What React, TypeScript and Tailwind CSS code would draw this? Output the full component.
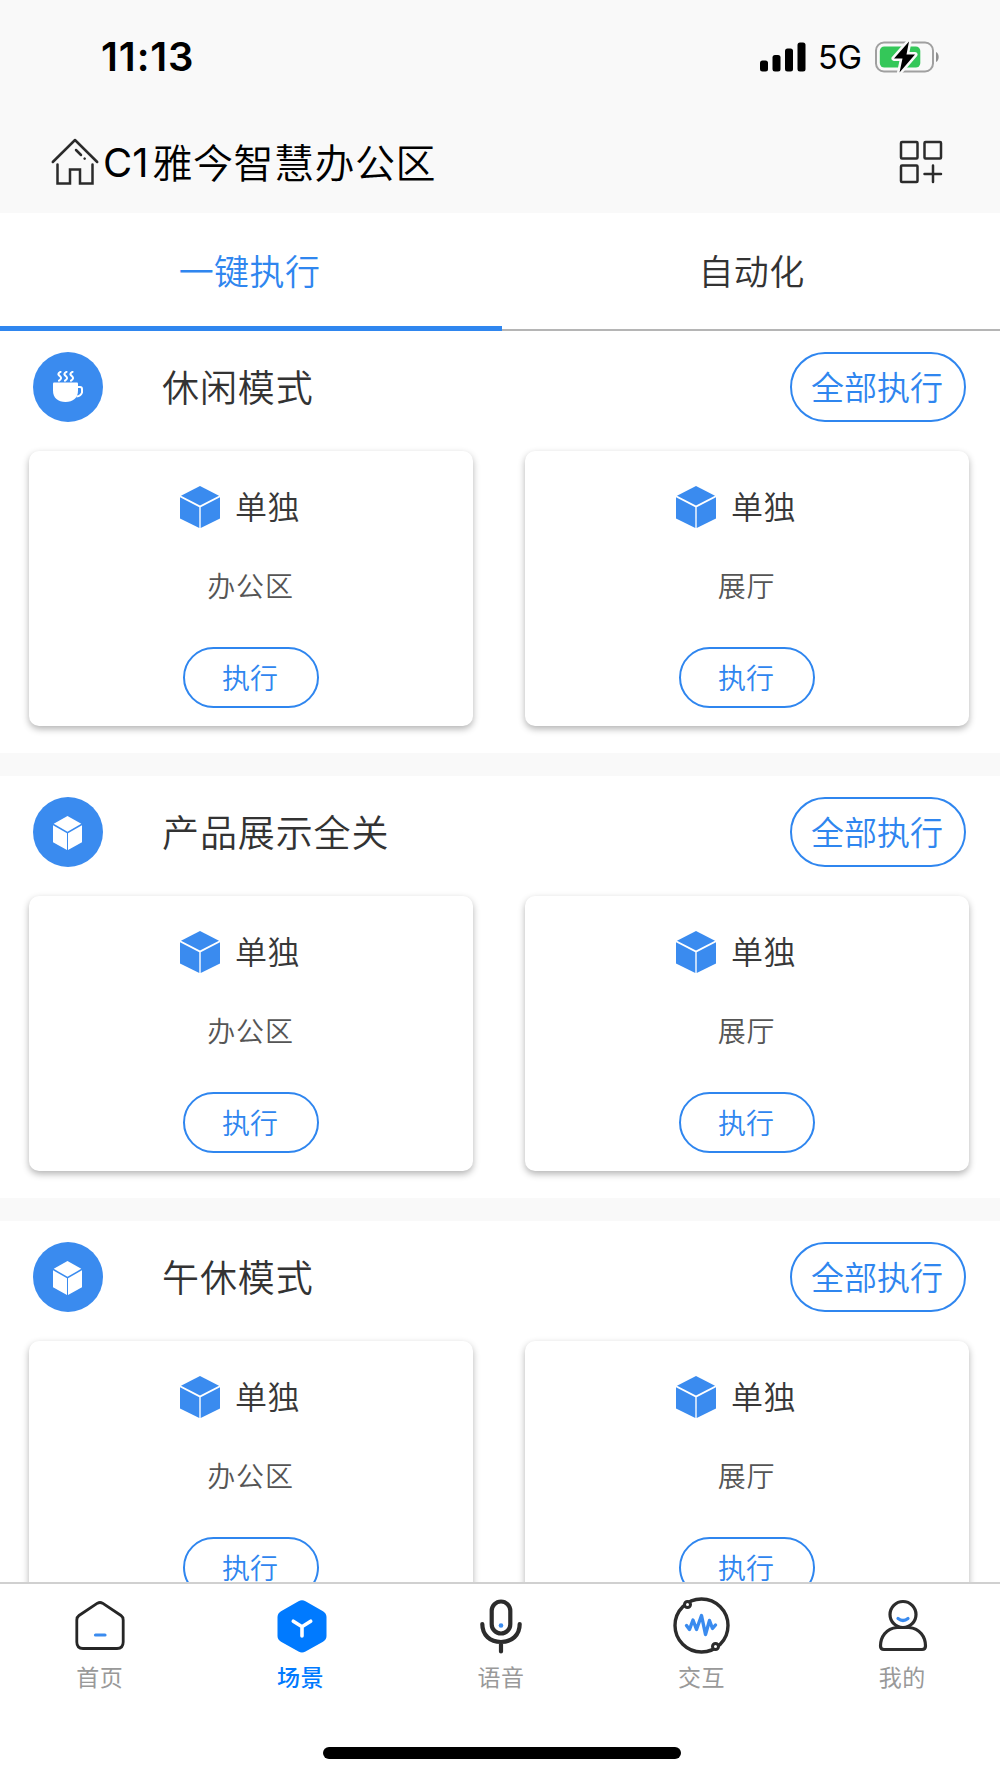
import type { ReactNode } from "react";

const HomeOutline = () => (
  <svg width="48" height="48" viewBox="0 0 48 48" fill="none" stroke="#2b2b2b" strokeWidth="2.500" strokeLinecap="round">
    <path d="M1.800 24 24 2l22.200 22" strokeLinejoin="round" />
    <path d="M6.500 26.500V45.500H19V31.500H29V45.500H41.500V26.500" />
    <path d="M25 12l5 5M33.600 20.600l.1.100" />
  </svg>
);

const GridAdd = () => (
  <svg width="44" height="44" viewBox="0 0 44 44" fill="none" stroke="#2b2b2b" strokeWidth="2.500" strokeLinecap="round">
    <rect x="2" y="2" width="16.500" height="16.500" rx="1" />
    <rect x="25.500" y="2" width="16.500" height="16.500" rx="1" />
    <rect x="2" y="25.500" width="16.500" height="16.500" rx="1" />
    <path d="M34 25.500V42M25.500 34H42" />
  </svg>
);

const Signal = () => (
  <svg width="46" height="30" viewBox="0 0 46 30" fill="#000">
    <rect x="0" y="18.500" width="8" height="11" rx="2.500" />
    <rect x="12.500" y="13" width="8" height="16.500" rx="2.500" />
    <rect x="25" y="6.500" width="8" height="23" rx="2.500" />
    <rect x="37.500" y="0.500" width="8" height="29" rx="2.500" />
  </svg>
);

const Battery = () => (
  <svg width="65" height="32" viewBox="0 0 65 32">
    <rect x="1" y="1.500" width="57" height="29" rx="8" fill="none" stroke="#a0a0a0" strokeWidth="2" />
    <path d="M61 11c3.600 1.500 3.600 8.500 0 10z" fill="#8f8f8f" />
    <rect x="4.800" y="5.500" width="40.500" height="21" rx="4.500" fill="#34c759" />
    <path d="M34 .5 19 17.500H27.500L24.500 31.500 40 13.500H31.500Z" fill="#000" stroke="#f9f9f9" strokeWidth="5" strokeLinejoin="round" />
    <path d="M34 .5 19 17.500H27.500L24.500 31.500 40 13.500H31.500Z" fill="#000" />
  </svg>
);

const Cube = ({ className }: { className: string }) => (
  <svg className={className} viewBox="0 0 40 42" preserveAspectRatio="none" fill="currentColor">
    <path d="M20 0 39 9.700 20 19.500 1 9.700Z" />
    <path d="M0 11.300 19.300 21.200V42L0 32.500Z" />
    <path d="M40 11.300 20.700 21.200V42L40 32.500Z" />
  </svg>
);

const Cup = () => (
  <svg width="30" height="32" viewBox="0 0 30 32" fill="none" stroke="#fff">
    <path d="M0 12.500Q0 11.500 1 11.500H24Q25 11.500 25 12.500V19.500C25 27 20 31 12.500 31S0 27 0 19.500Z" fill="#fff" stroke="none" />
    <path d="M24 16H27Q29 16 29 18V21.500Q28 25 23.500 25.500" strokeWidth="2" />
    <path d="M7.500 .8C4 2.600 5.500 4 7 5.300S8.500 8 6 9.600M13.500 .8C10 2.600 11.500 4 13 5.300S14.500 8 12 9.600M19.500 .8C16 2.600 17.500 4 19 5.300S20.500 8 18 9.600" strokeWidth="2" strokeLinecap="round" />
  </svg>
);

const NavHome = () => (
  <svg width="56" height="56" viewBox="0 0 56 56" fill="none" strokeWidth="2.800" strokeLinecap="round" strokeLinejoin="round">
    <path d="M25.500 4.200Q28 2.800 30.500 4.200L49 16.500Q51.200 18 51.200 21V43Q51.200 49.500 45 49.500H11Q4.800 49.500 4.800 43V21Q4.800 18 7 16.500Z" stroke="#262626" />
    <path d="M23.500 36H33" stroke="#3a8bef" strokeWidth="3.200" />
  </svg>
);

const NavScene = () => (
  <svg className="ml-[2px]" width="56" height="56" viewBox="0 0 56 56" fill="none" strokeLinecap="round">
    <path d="M24.500 2.200Q28 .4 31.500 2.200L49 12.200Q52.500 14.500 52.500 18V37Q52.500 40.500 49 42.800L31.500 52.600Q28 54.600 24.500 52.600L7 42.800Q3.500 40.500 3.500 37V18Q3.500 14.500 7 12.200Z" fill="#007aff" />
    <path d="M19.300 22.200 28 27.700 36.700 22.200M28 27.700V37" stroke="#fff" strokeWidth="3.600" />
  </svg>
);

const NavVoice = () => (
  <svg width="56" height="56" viewBox="0 0 56 56" fill="none" stroke="#2c2c2c" strokeWidth="4.200" strokeLinecap="round">
    <rect x="18.700" y="2.500" width="18.600" height="32" rx="9.300" />
    <path d="M9.300 25C9.300 36 17 43 28 43S46.700 36 46.700 25M28 43V52.500" />
    <circle cx="28" cy="26.500" r="2.300" fill="#3a8bef" stroke="none" />
  </svg>
);

const NavInteract = () => (
  <svg className="overflow-visible" width="56" height="56" viewBox="0 0 56 56" fill="none" strokeLinecap="round" strokeLinejoin="round">
    <circle cx="27.500" cy="26.500" r="26.500" stroke="#2c2c2c" strokeWidth="3.400" />
    <circle cx="13.500" cy="5.500" r="3" fill="#fff" stroke="#2c2c2c" strokeWidth="3" />
    <circle cx="41.500" cy="47.500" r="3" fill="#fff" stroke="#2c2c2c" strokeWidth="3" />
    <path d="M12.500 26.500 15.500 30.500 19 21 22.500 30.500 27.500 16.500 31.500 35.500 35.500 21.500 38.500 29.500 41.500 26" stroke="#3a8bef" strokeWidth="3.400" />
  </svg>
);

const NavMine = () => (
  <svg width="56" height="56" viewBox="0 0 56 56" fill="none" stroke="#2c2c2c" strokeWidth="3.200" strokeLinecap="round" strokeLinejoin="round">
    <circle cx="28" cy="15.500" r="13" />
    <path d="M22 28.500H34C45 29.500 50.500 38 50.500 47Q50.500 50.500 47 50.500H9Q5.500 50.500 5.500 47C5.500 38 11 29.500 22 28.500Z" />
    <path d="M23 19.500Q28 23.500 33 19.500" stroke="#3a8bef" />
  </svg>
);

const scenes = [
  { name: "休闲模式", icon: <Cup /> },
  { name: "产品展示全关", icon: <Cube className="mt-[2px] mr-[1px] h-[34px] w-[29px]" /> },
  { name: "午休模式", icon: <Cube className="mt-[2px] mr-[1px] h-[34px] w-[29px]" /> },
];

const areas = ["办公区", "展厅"];

const navItems = [
  { label: "首页", icon: <NavHome />, active: false },
  { label: "场景", icon: <NavScene />, active: true },
  { label: "语音", icon: <NavVoice />, active: false },
  { label: "交互", icon: <NavInteract />, active: false },
  { label: "我的", icon: <NavMine />, active: false },
];

const AreaCard = ({ area }: { area: string }) => (
  <div className="flex h-[275px] flex-col items-center rounded-[10px] bg-white pt-[35px] shadow-[0_3px_7px_rgba(0,0,0,0.3)]">
    <div className="flex h-[42px] items-center gap-[15px] pr-[22px]">
      <Cube className="h-[42px] w-10 text-[#3a8bef]" />
      <span className="pb-[4px] text-[32px] leading-[42px] tracking-[0.5px] text-[#383838]">单独</span>
    </div>
    <p className="mt-[37px] pr-[1px] text-[28px] leading-10 tracking-[0.8px] text-[#555]">{area}</p>
    <button className="mt-[42px] h-[61px] w-[136px] rounded-full border-2 border-[#2f86ef] pr-[2px] pb-[2px] text-[28px] leading-none text-[#2f86ef]">
      执行
    </button>
  </div>
);

const SceneSection = ({ name, icon }: { name: string; icon: ReactNode }) => (
  <section className="h-[422px] shrink-0 bg-white pt-[21px]">
    <div className="flex h-[70px] items-center pr-[34px] pl-[33px]">
      <div className="flex size-[70px] items-center justify-center rounded-full bg-[#3a8bef] text-white">{icon}</div>
      <h2 className="ml-[59px] flex-1 pb-[2px] text-[37px] leading-[67px] tracking-[0.9px] text-[#333]">{name}</h2>
      <button className="h-[70px] w-[176px] rounded-full border-2 border-[#2f86ef] pr-[2px] pb-[2px] text-[33px] leading-none text-[#2f86ef]">
        全部执行
      </button>
    </div>
    <div className="mt-[29px] grid grid-cols-2 gap-[52px] pr-[31px] pl-[29px]">
      {areas.map((area) => (
        <AreaCard key={area} area={area} />
      ))}
    </div>
  </section>
);

const App = () => {
  return (
    <div className="flex h-[1778px] w-[1000px] flex-col overflow-hidden bg-white font-['Noto_Sans_CJK_SC',sans-serif] font-[350]">
      <header className="h-[213px] shrink-0 bg-[#f9f9f9]">
        <div className="flex h-[113px] items-center pr-[60px] pl-[101px]">
          <span className="flex-1 font-['Inter',sans-serif] text-[40px] font-semibold tracking-[0.9px] text-black">11:13</span>
          <Signal />
          <span className="mt-[3px] mr-[13px] ml-[12px] font-['Inter',sans-serif] text-[32.5px] font-normal text-black">5G</span>
          <Battery />
        </div>
        <div className="flex h-[98px] items-center pr-[57px] pl-[51px]">
          <HomeOutline />
          <h1 className="ml-[4px] flex flex-1 items-center text-[40px] leading-[60px] text-black">
            <span className="mt-[2px] mr-[4px] font-['Inter',sans-serif] font-normal">C1</span>
            <span className="pb-[3px] tracking-[0.5px]">雅今智慧办公区</span>
          </h1>
          <GridAdd />
        </div>
      </header>

      <div className="flex h-[118px] shrink-0 text-[35px] leading-[114px] tracking-[0.4px]">
        <button className="w-[502px] border-b-[5px] border-[#2f86ef] pr-[3px] pb-[1px] text-[#2f86ef]">一键执行</button>
        <button className="flex-1 border-b-2 border-[#b5b5b5] pb-[3px] pl-[1px] text-[#333]">自动化</button>
      </div>

      <main className="flex min-h-0 flex-1 flex-col gap-[23px] overflow-hidden bg-[#f9f9f9]">
        {scenes.map((scene) => (
          <SceneSection key={scene.name} name={scene.name} icon={scene.icon} />
        ))}
      </main>

      <footer className="flex h-[196px] shrink-0 flex-col border-t-2 border-[#d0d0d0] bg-white">
        <nav className="grid h-[163px] w-[1003px] grid-cols-5 pt-[15px]">
          {navItems.map((item) => (
            <a key={item.label} className="flex flex-col items-center">
              {item.icon}
              <span
                className={`mt-[6px] pr-[1px] text-[23px] leading-[30px] tracking-[0.5px] ${
                  item.active ? "font-medium text-[#007aff]" : "font-normal text-[#999]"
                }`}
              >
                {item.label}
              </span>
            </a>
          ))}
        </nav>
        <div className="ml-[323px] h-3 w-[358px] rounded-full bg-black" />
      </footer>
    </div>
  );
};

export default App;
